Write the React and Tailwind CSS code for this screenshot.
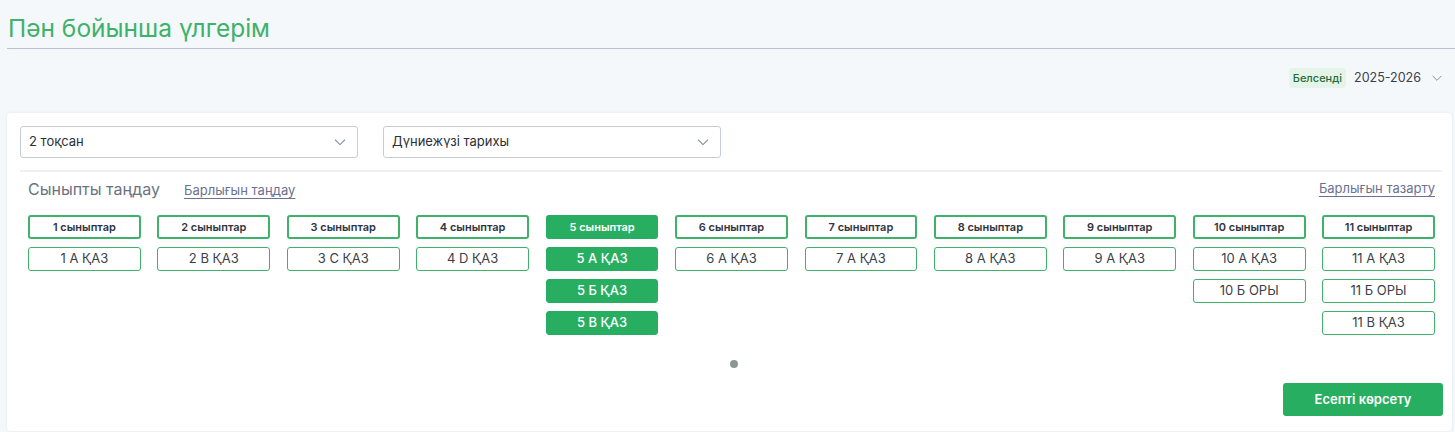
import React from "react";

const ChevronDown = ({ className }) => (
  <svg className={className} viewBox="0 0 24 24" fill="none" stroke="currentColor" strokeWidth="1.6" strokeLinecap="round" strokeLinejoin="round">
    <path d="M5 9l7 7 7-7" />
  </svg>
);

const columns = [
  { grade: "1", items: ["1 А ҚАЗ"] },
  { grade: "2", items: ["2 В ҚАЗ"] },
  { grade: "3", items: ["3 С ҚАЗ"] },
  { grade: "4", items: ["4 D ҚАЗ"] },
  { grade: "5", items: ["5 А ҚАЗ", "5 Б ҚАЗ", "5 В ҚАЗ"], active: true },
  { grade: "6", items: ["6 А ҚАЗ"] },
  { grade: "7", items: ["7 А ҚАЗ"] },
  { grade: "8", items: ["8 А ҚАЗ"] },
  { grade: "9", items: ["9 А ҚАЗ"] },
  { grade: "10", items: ["10 А ҚАЗ", "10 Б ОРЫ"] },
  { grade: "11", items: ["11 А ҚАЗ", "11 Б ОРЫ", "11 В ҚАЗ"] },
];

export default function App() {
  return (
    <div className="w-[1455px] h-[432px] bg-[#f5f8fb] overflow-hidden" style={{ fontFamily: "Inter, 'Noto Sans', sans-serif" }}>
      <div className="pl-[7px] pt-[13px]">
        <h1 className="text-[24.5px] leading-[30px] text-[#3fb16a] pl-px pb-[5px] border-b border-[#b9c0d4] font-normal">
          Пән бойынша үлгерім
        </h1>
      </div>
      <div className="flex justify-end items-center pr-[11px] mt-[19px] h-[20px]">
        <span className="bg-[#e5f4e9] text-[#1f6b3a] text-[11px] leading-[20px] px-[4px] rounded-[3px] font-medium">Белсенді</span>
        <span className="ml-[8px] text-[12.5px] text-[#3a4150]">2025-2026</span>
        <ChevronDown className="w-[14px] h-[14px] ml-[9px] text-[#7c8495]" />
      </div>
      <div className="ml-[7px] mr-[3px] mt-[25px] bg-white rounded-[4px] shadow-[0_0_3px_rgba(0,0,0,0.08)] h-[318px] pl-[13px] pr-[17px] pt-[13px] flex flex-col">
        <div className="flex gap-[25px]">
          {["2 тоқсан", "Дүниежүзі тарихы"].map((t) => (
            <div key={t} className="w-[338px] h-[32px] border border-[#c5cdd9] rounded-[3px] flex items-center justify-between pl-[8px] pr-[9px] text-[13px] text-[#2b2f36]">
              <span>{t}</span>
              <ChevronDown className="w-[16px] h-[16px] text-[#8a93a3]" />
            </div>
          ))}
        </div>
        <div className="mt-[12px] border-t-2 border-[#eef0f3] mr-[-7px]" />
        <div className="flex items-center justify-between pl-[8px] mt-[6px] h-[22px]">
          <div className="flex items-baseline">
            <span className="text-[16px] text-[#6c7280]">Сыныпты таңдау</span>
            <span className="ml-[24px] text-[13px] text-[#6b7190] underline underline-offset-[3px] decoration-[#6b7190]">Барлығын таңдау</span>
          </div>
          <span className="text-[13px] text-[#6b7190] underline underline-offset-[3px]">Барлығын тазарту</span>
        </div>
        <div className="grid grid-cols-11 gap-x-[16.6px] ml-[8px] mt-[15px] items-start">
          {columns.map((c) => (
            <div key={c.grade} className="flex flex-col gap-[8px]">
              <div
                className={
                  "h-[24px] rounded-[3px] flex items-center justify-center text-[11px] font-semibold " +
                  (c.active
                    ? "bg-[#27ae60] border-2 border-[#27ae60] text-white"
                    : "border-2 border-[#3fb16a] text-[#2f3440]")
                }
              >
                {c.grade} сыныптар
              </div>
              {c.items.map((it) => (
                <div
                  key={it}
                  className={
                    "h-[24px] rounded-[3px] flex items-center justify-center text-[13px] " +
                    (c.active
                      ? "bg-[#27ae60] border border-[#27ae60] text-white font-medium"
                      : "border border-[#3fb16a] text-[#3a3f4a]")
                  }
                >
                  {it}
                </div>
              ))}
            </div>
          ))}
        </div>
        <div className="flex justify-center mt-[25px] pl-[12px]">
          <div className="w-[8px] h-[8px] rounded-full bg-[#899896]" />
        </div>
        <div className="flex justify-end mr-[-8px] mt-[15px]">
          <button className="w-[160px] h-[33px] bg-[#27ae60] text-white text-[13px] font-semibold rounded-[3px]">
            Есепті көрсету
          </button>
        </div>
      </div>
    </div>
  );
}
